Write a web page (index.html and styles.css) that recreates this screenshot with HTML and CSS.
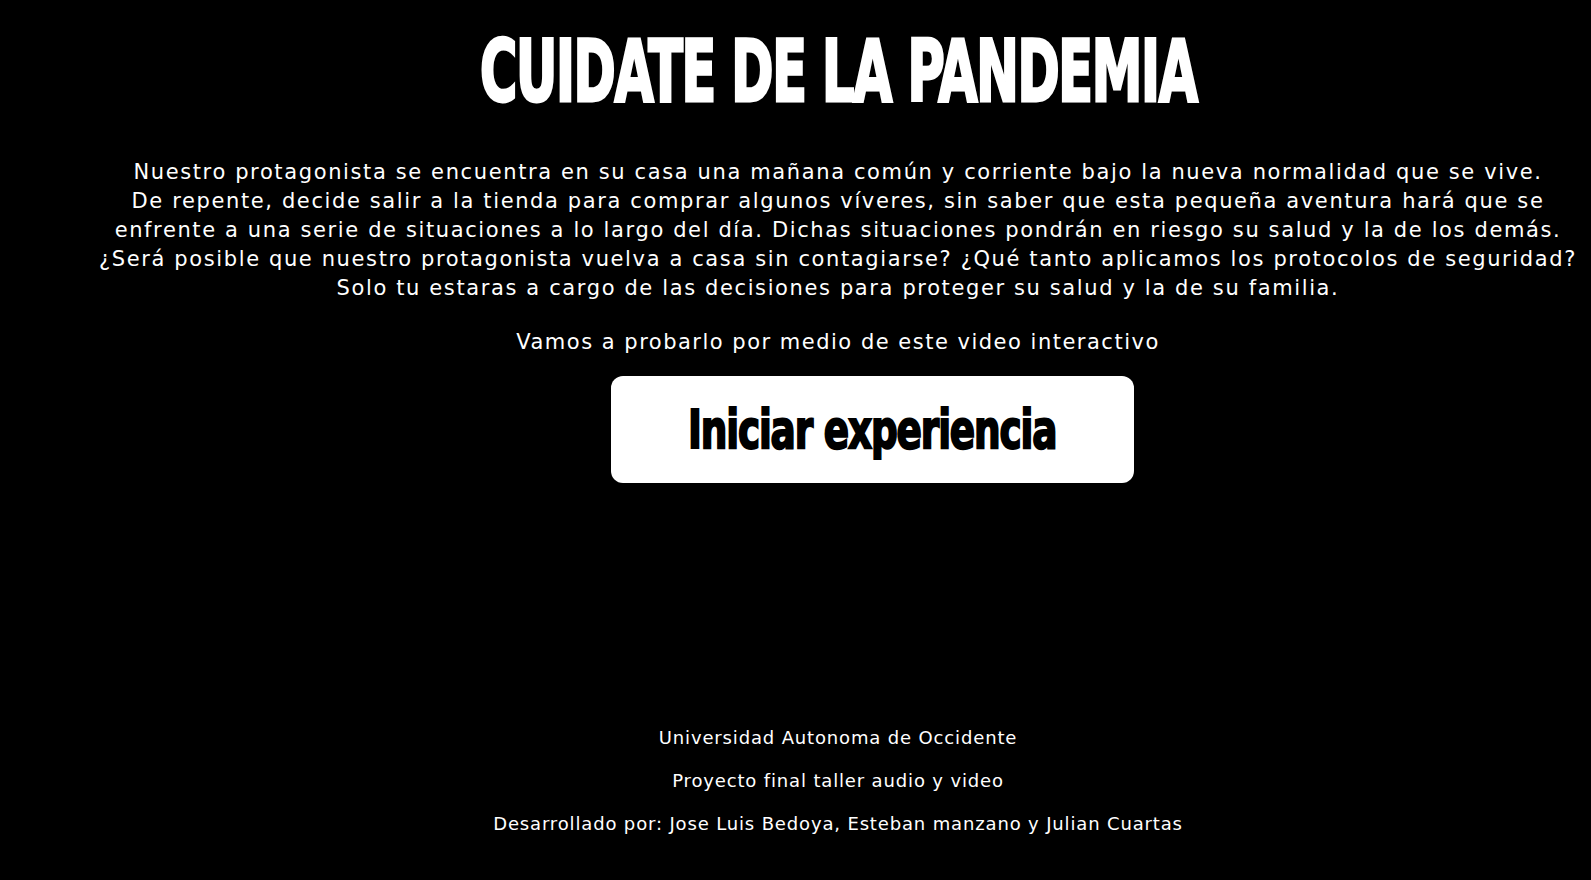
FILE: index.html
```html
<!DOCTYPE html>
<html lang="es">
<head>
<meta charset="utf-8">
<title>Cuidate de la pandemia</title>
<link rel="stylesheet" href="styles.css">
</head>
<body>
<main class="page">
  <h1 class="title"><span class="title-text">CUIDATE DE LA PANDEMIA</span></h1>
  <p class="story">Nuestro protagonista se encuentra en su casa una mañana común y corriente bajo la nueva normalidad que se vive.<br>De repente, decide salir a la tienda para comprar algunos víveres, sin saber que esta pequeña aventura hará que se<br>enfrente a una serie de situaciones a lo largo del día. Dichas situaciones pondrán en riesgo su salud y la de los demás.<br>¿Será posible que nuestro protagonista vuelva a casa sin contagiarse? ¿Qué tanto aplicamos los protocolos de seguridad?<br>Solo tu estaras a cargo de las decisiones para proteger su salud y la de su familia.</p>
  <p class="invite">Vamos a probarlo por medio de este video interactivo</p>
  <a class="start" href="#"><span class="start-text">Iniciar experiencia</span></a>
  <footer class="credits">
    <p>Universidad Autonoma de Occidente</p>
    <p>Proyecto final taller audio y video</p>
    <p>Desarrollado por: Jose Luis Bedoya, Esteban manzano y Julian Cuartas</p>
  </footer>
</main>
</body>
</html>
```
FILE: styles.css
```css
html, body {
  margin: 0;
  padding: 0;
  background: #000;
  color: #fff;
}
body {
  font-family: "DejaVu Sans", Verdana, sans-serif;
  height: 880px;
  overflow: hidden;
}
.page {
  display: flex;
  flex-direction: column;
  align-items: center;
  padding-left: 85px;
}
.title {
  margin: 0;
  padding-top: 28px;
  height: 100px;
  font-family: "DejaVu Sans Condensed", sans-serif;
  font-weight: bold;
  font-size: 86px;
  line-height: 86px;
  white-space: nowrap;
}
.title-text {
  display: inline-block;
  letter-spacing: -2px;
  -webkit-text-stroke: 3px #fff;
  transform: scaleX(0.657);
}
.story {
  margin: 30px 0 0;
  font-size: 21px;
  letter-spacing: 1.62px;
  line-height: 29px;
  text-align: center;
  white-space: nowrap;
}
.invite {
  margin: 25px 0 0;
  font-size: 21px;
  letter-spacing: 1.5px;
  line-height: 29px;
}
.start {
  margin: 19px 0 0 68px;
  width: 523px;
  height: 107px;
  border-radius: 12px;
  background: #fff;
  color: #000;
  text-decoration: none;
  display: flex;
  align-items: center;
  justify-content: center;
  font-family: "DejaVu Sans Condensed", sans-serif;
  font-weight: bold;
  font-size: 54px;
}
.start-text {
  display: inline-block;
  letter-spacing: -1.5px;
  -webkit-text-stroke: 2px #000;
  transform: scaleX(0.77);
}
.credits {
  margin-top: 233px;
  text-align: center;
  font-size: 18px;
  letter-spacing: 0.85px;
}
.credits p {
  margin: 0;
  line-height: 43px;
}
```
